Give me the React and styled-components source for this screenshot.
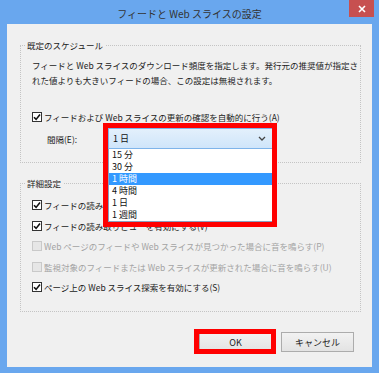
import React from "react";
import styled, { createGlobalStyle } from "styled-components";

const GlobalStyle = createGlobalStyle`
  html, body {
    margin: 0;
    padding: 0;
  }
  body {
    font-family: "Noto Sans CJK JP", "Noto Sans", sans-serif;
    background: #69a7ee;
  }
`;

const intervals = ["15 分", "30 分", "1 時間", "4 時間", "1 日", "1 週間"];

const detailRows = [
  { label: "フィードの読み取り時にフィードを自動的に既読にする(M)", checked: true },
  { label: "フィードの読み取りビューを有効にする(V)", checked: true },
  { label: "Web ページのフィードや Web スライスが見つかった場合に音を鳴らす(P)", disabled: true },
  { label: "監視対象のフィードまたは Web スライスが更新された場合に音を鳴らす(U)", disabled: true },
  { label: "ページ上の Web スライス探索を有効にする(S)", checked: true },
];

function CheckBox({ checked, disabled }) {
  return (
    <Box $disabled={disabled}>
      {checked && (
        <svg width="8" height="8" viewBox="0 0 8 8">
          <path d="M1 4.2 L3.1 6.4 L7 1.4" fill="none" stroke="#111" strokeWidth="1.6" />
        </svg>
      )}
    </Box>
  );
}

export default function App() {
  return (
    <>
      <GlobalStyle />
      <Window>
        <TitleBar>
          <span />
          <Title>フィードと Web スライスの設定</Title>
          <CloseButton>
            <svg width="8" height="8" viewBox="0 0 8 8">
              <path d="M1 1 L7 7 M7 1 L1 7" stroke="#fff" strokeWidth="1.6" />
            </svg>
          </CloseButton>
        </TitleBar>
        <Client>
          <GroupBox $height={118}>
            <Legend>既定のスケジュール</Legend>
            <Description>
              <Line>フィードと Web スライスのダウンロード頻度を指定します。発行元の推奨値が指定さ</Line>
              <Line>れた値よりも大きいフィードの場合、この設定は無視されます。</Line>
            </Description>
            <CheckRow $top={22} $height={14}>
              <CheckBox checked />
              <RowText>フィードおよび Web スライスの更新の確認を自動的に行う(A)</RowText>
            </CheckRow>
            <IntervalRow>
              <IntervalLabel>間隔(E):</IntervalLabel>
              <SelectWrap>
                <Select>
                  <span>1 日</span>
                  <svg width="8" height="5" viewBox="0 0 8 5">
                    <path d="M1 1 L4 4 L7 1" fill="none" stroke="#444" strokeWidth="1.3" />
                  </svg>
                </Select>
                <DropList>
                  {intervals.map((item) => (
                    <DropItem key={item} $active={item === "1 時間"}>
                      {item}
                    </DropItem>
                  ))}
                </DropList>
                <SelectMark />
              </SelectWrap>
            </IntervalRow>
          </GroupBox>

          <GroupBox $height={129} $gap={20}>
            <Legend>詳細設定</Legend>
            <RowList>
              {detailRows.map((row) => (
                <CheckRow key={row.label} $height={20.5}>
                  <CheckBox checked={row.checked} disabled={row.disabled} />
                  <RowText $disabled={row.disabled}>{row.label}</RowText>
                </CheckRow>
              ))}
            </RowList>
          </GroupBox>

          <ButtonBar>
            <ButtonWrap>
              <Button>OK</Button>
              <OkMark />
            </ButtonWrap>
            <Button>キャンセル</Button>
          </ButtonBar>
        </Client>
      </Window>
    </>
  );
}

const Window = styled.div`
  width: 379px;
  height: 373px;
  box-sizing: border-box;
  padding: 0 7px 6px 7px;
  background: #69a7ee;
  display: flex;
  flex-direction: column;
`;

const TitleBar = styled.div`
  height: 24px;
  display: grid;
  grid-template-columns: 1fr auto 1fr;
  margin: 0 -7px;
`;

const Title = styled.div`
  font-size: 10px;
  line-height: 24px;
  padding-top: 2px;
  color: #333;
  white-space: nowrap;
`;

const CloseButton = styled.div`
  justify-self: end;
  align-self: start;
  width: 25px;
  height: 17px;
  margin-right: 5px;
  background: #c75050;
  display: flex;
  align-items: center;
  justify-content: center;
`;

const Client = styled.div`
  flex: 1;
  background: #f0f0f0;
  padding: 21px 11px 0 13px;
  display: flex;
  flex-direction: column;
`;

const GroupBox = styled.div`
  height: ${(p) => p.$height}px;
  margin-top: ${(p) => p.$gap || 0}px;
  box-sizing: border-box;
  border: 1px dotted #c4c4c4;
  padding: 0 10px 0 11px;
  display: flex;
  flex-direction: column;
  font-size: 8.5px;
  color: #222;
`;

const Legend = styled.div`
  align-self: flex-start;
  margin: -7px 0 0 -7px;
  padding: 0 2px;
  line-height: 12px;
  font-size: 8.5px;
  background: #f0f0f0;
  color: #222;
`;

const Description = styled.div`
  margin-top: 7px;
  line-height: 15px;
`;

const Line = styled.div`
  white-space: nowrap;
`;

const CheckRow = styled.div`
  display: flex;
  align-items: center;
  gap: 2px;
  height: ${(p) => p.$height}px;
  margin-top: ${(p) => p.$top || 0}px;
`;

const RowList = styled.div`
  margin-top: 6px;
  display: flex;
  flex-direction: column;
`;

const Box = styled.div`
  width: 10px;
  height: 10px;
  box-sizing: border-box;
  border: 1px solid ${(p) => (p.$disabled ? "#c9c9c9" : "#333")};
  background: ${(p) => (p.$disabled ? "#e6e6e6" : "#fff")};
  display: flex;
  align-items: center;
  justify-content: center;
  flex-shrink: 0;
`;

const RowText = styled.span`
  white-space: nowrap;
  line-height: 12px;
  color: ${(p) => (p.$disabled ? "#a3a3a3" : "#222")};
`;

const IntervalRow = styled.div`
  display: flex;
  align-items: center;
  margin-top: 4px;
`;

const IntervalLabel = styled.span`
  width: 61px;
  margin-left: 15px;
  white-space: nowrap;
`;

const SelectWrap = styled.div`
  position: relative;
  width: 165px;
`;

const Select = styled.div`
  height: 21px;
  box-sizing: border-box;
  border: 1px solid #7eb4ea;
  background: linear-gradient(#e3f0fc, #cfe5fa);
  padding: 0 6px 0 4px;
  display: flex;
  align-items: center;
  justify-content: space-between;
  font-size: 9px;
  color: #111;
`;

const DropList = styled.div`
  position: absolute;
  top: 21px;
  left: 0;
  right: 0;
  background: #fff;
  border: 1px solid #8a9fbf;
  border-top: none;
  z-index: 1;
`;

const DropItem = styled.div`
  height: 12px;
  line-height: 12px;
  padding-left: 3px;
  font-size: 9px;
  background: ${(p) => (p.$active ? "#3399ff" : "transparent")};
  color: ${(p) => (p.$active ? "#fff" : "#111")};
`;

const SelectMark = styled.div`
  position: absolute;
  top: -5px;
  left: -5px;
  width: 174px;
  height: 104px;
  box-sizing: border-box;
  border: 5px solid #ff0000;
  z-index: 2;
  pointer-events: none;
`;

const ButtonBar = styled.div`
  display: flex;
  justify-content: flex-end;
  gap: 9px;
  margin-top: 20px;
  padding-right: 7px;
`;

const ButtonWrap = styled.div`
  position: relative;
`;

const Button = styled.div`
  width: 73px;
  height: 20px;
  box-sizing: border-box;
  border: 1px solid #acacac;
  background: linear-gradient(#f2f2f2, #e3e3e3);
  display: flex;
  align-items: center;
  justify-content: center;
  font-size: 9px;
  color: #222;
`;

const OkMark = styled.div`
  position: absolute;
  top: -3px;
  bottom: -2px;
  left: -5px;
  right: -4px;
  border: 5px solid #ff0000;
  pointer-events: none;
`;
